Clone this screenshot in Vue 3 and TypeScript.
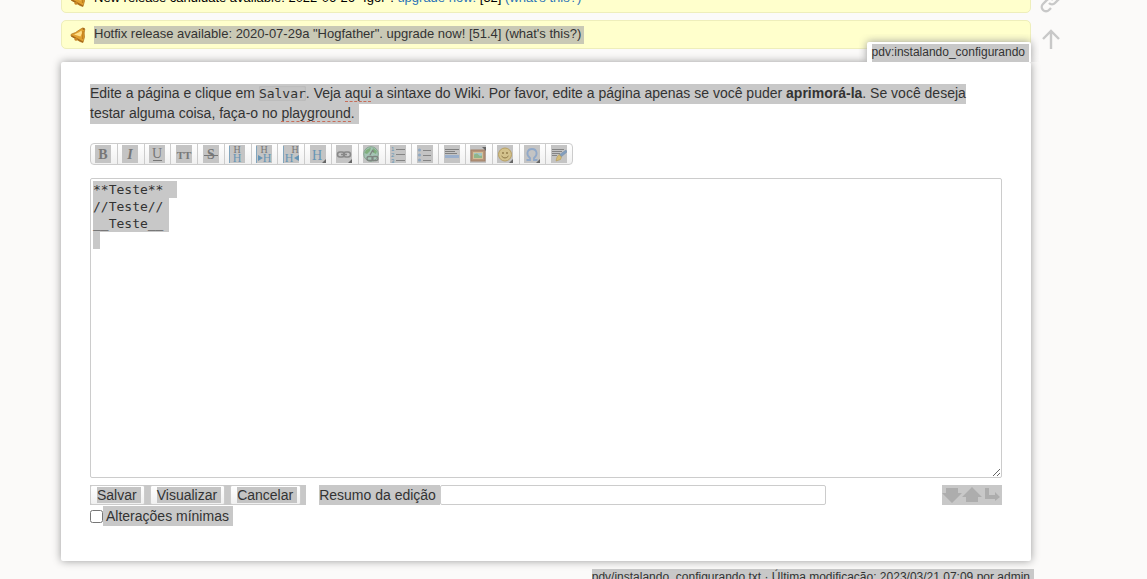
<script setup lang="ts">
import { ref } from 'vue'

interface Tool {
  id: string
  label: string
}

const tools: Tool[] = [
  { id: 'bold', label: 'Negrito' },
  { id: 'italic', label: 'Itálico' },
  { id: 'underline', label: 'Sublinhado' },
  { id: 'mono', label: 'Texto monoespaçado' },
  { id: 'strike', label: 'Texto tachado' },
  { id: 'hequal', label: 'Cabeçalho de mesmo nível' },
  { id: 'hminus', label: 'Cabeçalho de nível mais baixo' },
  { id: 'hplus', label: 'Cabeçalho de nível mais alto' },
  { id: 'h', label: 'Selecionar cabeçalho' },
  { id: 'link', label: 'Link interno' },
  { id: 'linkextern', label: 'Link externo' },
  { id: 'ol', label: 'Lista numerada' },
  { id: 'ul', label: 'Lista com marcadores' },
  { id: 'hr', label: 'Linha horizontal' },
  { id: 'image', label: 'Adicionar imagens' },
  { id: 'smiley', label: 'Carinhas' },
  { id: 'chars', label: 'Caracteres especiais' },
  { id: 'sig', label: 'Inserir assinatura' },
]

const buttons: string[] = ['Salvar', 'Visualizar', 'Cancelar']
const wikiText = ref('**Teste**  \n//Teste// \n__Teste__\n')
const summary = ref('')
const minor = ref(false)
</script>

<template>
  <div class="viewport">
    <div class="site">
      <main class="content">
        <div v-for="n in 2" :key="n" class="notice">
          <svg class="bell" viewBox="0 0 16 16" aria-hidden="true">
            <path d="M12.500 1 14.800 2 14.200 6 14.500 10 13 15.500 10 14.500 1 9 1.200 7.200 5.500 5.500 9.500 2.800Z" fill="#e0a030" stroke="#b0731a" stroke-width=".7" />
            <path d="M4 7.500 8.500 5.500 11.500 3.500 12 6 10.500 9.500Z" fill="#ffe08a" />
            <path d="M1.500 8.800 12.800 15" stroke="#a3671a" stroke-width="1.400" />
            <path d="M13 4 12.500 12" stroke="#c07f1c" stroke-width="1.200" />
            <circle cx="6" cy="12.300" r="1.500" fill="#c98724" />
            <circle cx="13.600" cy="1.800" r="1.100" fill="#a3671a" />
          </svg>
          <p v-if="n === 1" class="notice-text">
            New release candidate available: 2022-06-26 "Igor". <a href="#upgrade">upgrade now!</a> [52] <a href="#what">(what's this?)</a>
          </p>
          <p v-else class="notice-text picked">
            Hotfix release available: 2020-07-29a "Hogfather". <a href="#hotfix">upgrade now!</a> [51.4] <a href="#about">(what's this?)</a>
          </p>
        </div>

        <section class="page">
          <div class="page-id"><span>pdv:instalando_configurando</span></div>

          <p class="intro">
            <span class="sel">Edite a página e clique em <code>Salvar</code>. Veja <a href="#syntax" class="missing">aqui</a> a sintaxe do Wiki. Por favor, edite a página apenas se você puder <strong>aprimorá-la</strong>. Se você deseja<br>testar alguma coisa, faça-o no <a href="#playground" class="missing">playground</a>.&nbsp;</span>
          </p>

          <form @submit.prevent>
            <div class="toolbar" role="toolbar" aria-label="Formatação">
              <button v-for="t in tools" :key="t.id" type="button" :title="t.label" :aria-label="t.label">
                <svg viewBox="0 0 16 18" aria-hidden="true">
                  <g v-if="t.id === 'bold'"><text x="8" y="14" text-anchor="middle" class="glyph heavy">B</text></g>
                  <g v-else-if="t.id === 'italic'"><text x="8" y="14" text-anchor="middle" class="glyph heavy slanted">I</text></g>
                  <g v-else-if="t.id === 'underline'">
                    <text x="8" y="13" text-anchor="middle" class="glyph big">U</text>
                    <path d="M4 15.500h9" stroke="#777" />
                  </g>
                  <g v-else-if="t.id === 'mono'"><text x="8" y="14" text-anchor="middle" class="glyph heavy caps">TT</text></g>
                  <g v-else-if="t.id === 'strike'">
                    <text x="8" y="14" text-anchor="middle" class="glyph heavy">S</text>
                    <path d="M1 10.500h14" stroke="#777" />
                  </g>
                  <g v-else-if="t.id === 'hequal' || t.id === 'hminus' || t.id === 'hplus'">
                    <path d="M.5 1v17" stroke="#82a5bd" />
                    <text :x="t.id === 'hplus' ? 12 : 8" y="8" text-anchor="middle" class="glyph small">H</text>
                    <text :x="t.id === 'hminus' ? 11 : t.id === 'hplus' ? 6 : 8" y="17" text-anchor="middle" class="glyph blue">H</text>
                    <path v-if="t.id === 'hminus'" d="M2 10v6l5-3z" fill="#6694b4" />
                    <path v-if="t.id === 'hplus'" d="M16 10v6l-5-3z" fill="#6694b4" />
                  </g>
                  <g v-else-if="t.id === 'h'">
                    <text x="7" y="15" text-anchor="middle" class="glyph blue big">H</text>
                    <path d="M16 14v4h-4z" fill="#666" />
                  </g>
                  <g v-else-if="t.id === 'link'" fill="none" stroke="#888" stroke-width="1.500">
                    <rect x="1.500" y="7" width="7" height="5" rx="2.500" />
                    <rect x="7.500" y="7" width="7" height="5" rx="2.500" />
                    <path d="M5 9.500h6" />
                    <path d="M16 14v4h-4z" fill="#666" stroke="none" />
                  </g>
                  <g v-else-if="t.id === 'linkextern'">
                    <circle cx="8" cy="9" r="7.300" fill="#a5c4b5" stroke="#87a691" />
                    <path d="M3 5 8 2.500 7 6 4 9 1.500 8ZM10 3l4 3-1 3-4-2Z" fill="#7faf7d" />
                    <g fill="none" stroke="#7e8580" stroke-width="1.300">
                      <path d="M7 10 9.500 5.500 11 7" />
                      <rect x="4" y="11.500" width="6" height="4" rx="2" />
                      <rect x="9" y="11.500" width="6" height="4" rx="2" />
                    </g>
                  </g>
                  <g v-else-if="t.id === 'ol'">
                    <path d="M6 4.500h9M6 9.500h9M6 15.500h9" stroke="#858585" />
                    <text x="1" y="6" class="digit">1</text>
                    <text x="1" y="12" class="digit">2</text>
                    <text x="1" y="18" class="digit">3</text>
                  </g>
                  <g v-else-if="t.id === 'ul'">
                    <path d="M6 5.500h8M6 10.500h8M6 15.500h8" stroke="#858585" />
                    <g fill="#91a9c2"><circle cx="2.500" cy="5" r="1.600" /><circle cx="2.500" cy="10" r="1.600" /><circle cx="2.500" cy="15" r="1.600" /></g>
                  </g>
                  <g v-else-if="t.id === 'hr'">
                    <path d="M1 4.500h14M1 6.500h10M1 8.500h12" stroke="#808080" />
                    <rect x="1" y="10" width="14" height="3" fill="#9bb0cc" />
                  </g>
                  <g v-else-if="t.id === 'image'">
                    <rect x="1" y="5" width="14" height="11" fill="#b8957a" stroke="#a08068" />
                    <rect x="3.500" y="7.500" width="9" height="6" fill="#a3c5c8" stroke="#d1c097" />
                    <path d="m4 9.500 3-1 3 2.500 2-.5v2.500h-8z" fill="#8fb58a" />
                    <path d="M12 2h4v4z" fill="#666" />
                  </g>
                  <g v-else-if="t.id === 'smiley'">
                    <circle cx="8" cy="9.500" r="6.500" fill="#d3c28c" stroke="#b89f62" />
                    <circle cx="6" cy="8" r=".9" fill="#8d7847" /><circle cx="10" cy="8" r=".9" fill="#8d7847" />
                    <path d="M4.500 11q3.500 4 7 0" fill="none" stroke="#8d7847" />
                    <path d="M16 14v4h-4z" fill="#666" />
                  </g>
                  <g v-else-if="t.id === 'chars'">
                    <path d="M2.500 15h3.500v-2C4 11.500 3 10 3.500 7.500 4 5 6 4 8 4s4 1 4.500 3.500C13 10 12 11.500 10 13v2h3.500" fill="none" stroke="#91a9c9" stroke-width="1.800" />
                    <path d="M16 14v4h-4z" fill="#666" />
                  </g>
                  <g v-else>
                    <path d="M1 4.500h12M1 6.500h10M1 8.500h8M1 10.500h5" stroke="#858585" />
                    <path d="m15 5 1 2-6 5-2-2z" fill="#829ebd" stroke="#758da8" stroke-width=".5" />
                    <path d="m8 9.500 2.500 2.500-1 2.500-4.500 1.500 1-4z" fill="#d6bd76" stroke="#ad9350" stroke-width=".5" />
                  </g>
                </svg>
              </button>
            </div>

            <textarea v-model="wikiText" class="editor" aria-label="Texto da página" spellcheck="false"></textarea>

            <div class="edit-bar">
              <div class="actions">
                <span v-for="b in buttons" :key="b" class="action"><button type="button"><span>{{ b }}</span></button></span>
              </div>
              <label class="summary-label" for="summary">Resumo da edição</label>
              <input id="summary" v-model="summary" class="summary" type="text">
              <div class="size-controls">
                <button type="button" aria-label="Aumentar">
                  <svg viewBox="0 0 20 20"><path d="M4 3h12v5h4L10 18 0 8h4z" /></svg>
                </button>
                <button type="button" aria-label="Diminuir">
                  <svg viewBox="0 0 20 20"><path d="M4 17h12v-5h4L10 2 0 12h4z" /></svg>
                </button>
                <button type="button" aria-label="Quebra de linha">
                  <svg viewBox="0 0 20 20"><path d="M3 3h4v7h6V7l5 5-5 4v-2H3z" /></svg>
                </button>
              </div>
            </div>
            <div class="minor">
              <input id="minor" v-model="minor" type="checkbox"><label for="minor">Alterações mínimas</label>
            </div>
          </form>
        </section>

        <div class="doc-info"><span>pdv/instalando_configurando.txt · Última modificação: 2023/03/21 07:09 por admin</span></div>
      </main>

      <nav class="page-tools" aria-label="Ferramentas da página">
        <a href="#backlinks" aria-label="Links reversos">
          <svg viewBox="0 0 24 24"><path d="M10 13a4 4 0 0 0 6 0l4-4a4 4 0 0 0-6-6l-2 2M14 10a4 4 0 0 0-6 0l-4 4a4 4 0 0 0 6 6l2-2" /></svg>
        </a>
        <a href="#top" aria-label="Voltar ao topo">
          <svg viewBox="0 0 24 24"><path d="M12 21V3M4 11l8-8 8 8" /></svg>
        </a>
      </nav>
    </div>
  </div>
</template>

<style>
html, body { background: #fbfaf9; }
</style>

<style scoped>
.viewport {
  height: 100vh;
  overflow: hidden;
  background: #fbfaf9;
  color: #333;
  font: 14px/20px "Liberation Sans", Arial, sans-serif;
}
.site {
  display: grid;
  grid-template-columns: minmax(0, 1fr) 116px;
  margin-top: -16px;
  padding-left: 61px;
}
p { margin: 0; }
button, input, textarea { font: inherit; color: inherit; box-sizing: border-box; margin: 0; }
svg { display: block; }

.notice {
  display: flex;
  align-items: center;
  gap: 8px;
  box-sizing: border-box;
  height: 29px;
  margin-bottom: 7px;
  padding: 0 8px;
  border: 1px solid #eeeebb;
  border-radius: 5px;
  background: #ffffcc;
  color: #000;
  font-size: 13px;
}
.bell { width: 16px; height: 16px; }
.notice-text { padding-bottom: 2px; line-height: 16px; }
.notice-text a { color: #2b73b7; text-decoration: none; }
.notice-text.picked { padding-right: 3px; background: #c9c9b5; color: #333; }
.notice-text.picked a { color: inherit; }

.page {
  position: relative;
  margin-top: 13px;
  padding: 21px 29px 35px;
  border-radius: 2px;
  background: #fff;
  box-shadow: 0 0 8px #999;
}
.page-id {
  position: absolute;
  right: 0;
  bottom: 100%;
  padding: 2px 2px 0 5px;
  border-radius: 2px 2px 0 0;
  background: #fff;
  box-shadow: 0 0 8px #999;
  clip-path: inset(-8px -8px 0 -8px);
  font-size: 12px;
  line-height: 16px;
}
.page-id span { display: block; padding: 0 4px 2px 0; background: #c8c8c8; }

.sel { padding: 1px 0 3px; background: #c8c8c8; }
.intro a { color: inherit; text-decoration: none; }
.intro .missing { border-bottom: 1px dashed #c76d59; }
code {
  border-radius: 2px;
  background: #c4c4c4;
  box-shadow: inset 0 0 2px #aaa;
  font: 13px "DejaVu Sans Mono", monospace;
}

.toolbar {
  display: flex;
  box-sizing: border-box;
  width: 483px;
  height: 22px;
  margin-top: 20px;
  border: 1px solid #ccc;
  border-radius: 4px;
  background: linear-gradient(#fff, #f0f0f0);
  overflow: hidden;
}
.toolbar button {
  flex: 1;
  display: flex;
  align-items: center;
  justify-content: center;
  padding: 0 1px 0 0;
  border: 0;
  border-right: 1px solid #ccc;
  background: none;
}
.toolbar button:last-child { border-right: 0; }
.toolbar svg { width: 16px; height: 18px; background: #c4c4c4; }
.glyph { font: 12px "Liberation Serif", serif; fill: #777; }
.heavy { font-weight: bold; font-size: 14px; }
.slanted { font-style: italic; }
.small { font-size: 10px; }
.caps { font-size: 11px; }
.blue { fill: #6694b4; }
.big { font-size: 14px; }
.digit { font: 6px "Liberation Sans", sans-serif; fill: #6694b4; }

.editor {
  display: block;
  width: 100%;
  height: 300px;
  margin-top: 13px;
  padding: 2px;
  border: 1px solid #ccc;
  border-radius: 2px;
  background-color: #fff;
  background-image:
    linear-gradient(#c8c8c8, #c8c8c8), linear-gradient(#c8c8c8, #c8c8c8), linear-gradient(#c8c8c8, #c8c8c8);
  background-position: 2px 2px, 2px 19px, 2px 53px;
  background-size: 84px 17px, 76px 34px, 7px 17px;
  background-repeat: no-repeat;
  font: 13px/17px "DejaVu Sans Mono", monospace;
  outline: 0;
}

.edit-bar { display: flex; align-items: center; margin-top: 7px; }
.actions { display: flex; margin-right: 13px; }
.action { display: block; padding-right: 5px; background: #c8c8c8; }
.action button {
  display: block;
  height: 20px;
  padding: 0 3px 0 6px;
  border: 1px solid #ccc;
  border-radius: 2px;
  background: linear-gradient(#fff, #f0f0f0);
}
.action button span { display: block; padding-right: 4px; background: #c4c4c4; line-height: 16px; }
.summary-label { padding-right: 4px; background: #c8c8c8; }
.summary {
  flex: 0 1 386px;
  min-width: 0;
  height: 20px;
  padding: 0 2px;
  border: 1px solid #ccc;
  border-radius: 2px;
  background: #fff;
}
.size-controls { display: flex; margin-left: auto; background: #c8c8c8; }
.size-controls button { padding: 0; border: 0; background: none; }
.size-controls svg { width: 20px; height: 20px; fill: #adadad; }

.minor { display: flex; align-items: center; margin-top: 1px; }
.minor input { width: 13px; height: 13px; }
.minor label { padding: 0 4px 0 3px; background: #c8c8c8; }

.doc-info {
  display: flex;
  justify-content: flex-end;
  margin: 8px -3px 0 0;
  font-size: 12px;
  line-height: 16px;
}
.doc-info span { padding-right: 4px; background: #c8c8c8; }

.page-tools { display: flex; flex-direction: column; gap: 14px; padding: 6px 0 0 8px; }
.page-tools svg { width: 24px; height: 24px; fill: none; stroke: #c8c8c8; stroke-width: 2.400; }
</style>
